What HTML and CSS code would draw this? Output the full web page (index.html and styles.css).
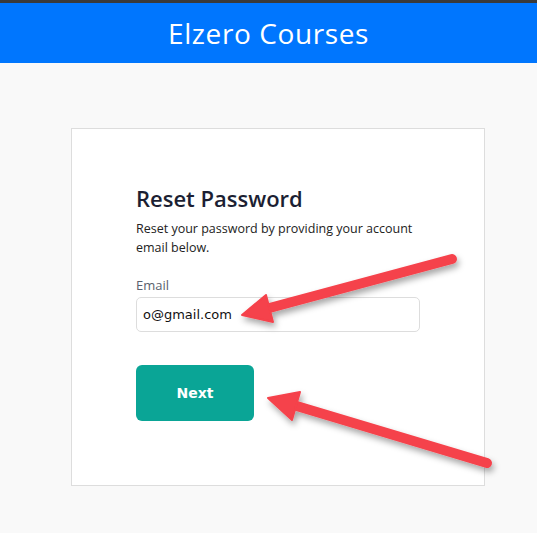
FILE: index.html
```html
<!DOCTYPE html>
<html lang="en">
<head>
  <meta charset="UTF-8">
  <title>Elzero Courses - Reset Password</title>
  <meta name="viewport" content="width=device-width, initial-scale=1">
  <link rel="stylesheet" href="styles.css">
</head>
<body>
  <header class="top-bar">
    <h1>Elzero Courses</h1>
  </header>

  <div class="card">
    <h2>Reset Password</h2>
    <p class="intro">Reset your password by providing your account email below.</p>

    <label for="email">Email</label>
    <input type="text" id="email" value="o@gmail.com">

    <button class="next-btn">Next</button>
  </div>

  <!-- annotation arrows drawn over the page -->
  <svg class="arrows" width="537" height="533" viewBox="0 0 537 533">
    <defs>
      <filter id="shadow" x="-20%" y="-50%" width="140%" height="200%">
        <feDropShadow dx="2" dy="4" stdDeviation="3" flood-color="#000" flood-opacity="0.35"/>
      </filter>
    </defs>
    <g filter="url(#shadow)" fill="#f5424b" stroke="#f5424b" stroke-linecap="round" stroke-linejoin="round">
      <line x1="452" y1="259" x2="262" y2="310" stroke-width="10"/>
      <polygon points="242,315 266,295 273,322" stroke-width="2"/>
      <line x1="487" y1="463" x2="290" y2="404" stroke-width="10"/>
      <polygon points="268,398 300,392 292,420" stroke-width="2"/>
    </g>
  </svg>
</body>
</html>
```

FILE: styles.css
```css
body {
  margin: 0;
  background-color: #f9f9f9;
  font-family: "Open Sans", Arial, sans-serif;
  position: relative;
  min-height: 533px;
}
.top-bar {
  background-color: #0076fe;
  border-top: 3px solid #3a3a3a;
  height: 60px;
  display: flex;
  align-items: center;
  justify-content: center;
}
.top-bar h1 {
  margin: 0;
  color: #fff;
  font-weight: 400;
  font-size: 28px;
  letter-spacing: 0.6px;
}
.card {
  background-color: #fff;
  border: 1px solid #ddd;
  width: 284px;
  height: 290px;
  margin: 65px 0 0 71px;
  padding: 54px 64px 12px 64px;
}
.card h2 {
  margin: 0 0 6px;
  font-size: 22px;
  font-weight: 600;
  color: #1c1f33;
}
.intro {
  margin: 0 0 19px;
  font-size: 12.5px;
  line-height: 19px;
  color: #222;
}
label {
  display: block;
  font-size: 13px;
  color: #5a5f6e;
  margin-bottom: 3px;
}
input[type="text"] {
  box-sizing: border-box;
  width: 284px;
  height: 35px;
  border: 1px solid #ddd;
  border-radius: 5px;
  padding: 0 6px;
  font-family: "DejaVu Sans", Verdana, sans-serif;
  font-size: 13px;
  color: #111;
  margin-bottom: 33px;
}
.next-btn {
  display: block;
  width: 118px;
  height: 56px;
  background-color: #0aa596;
  color: #fff;
  border: none;
  border-radius: 6px;
  font-family: "DejaVu Sans", Verdana, sans-serif;
  font-weight: bold;
  font-size: 14px;
  cursor: pointer;
}
.arrows {
  position: absolute;
  left: 0;
  top: 0;
  pointer-events: none;
}
```
